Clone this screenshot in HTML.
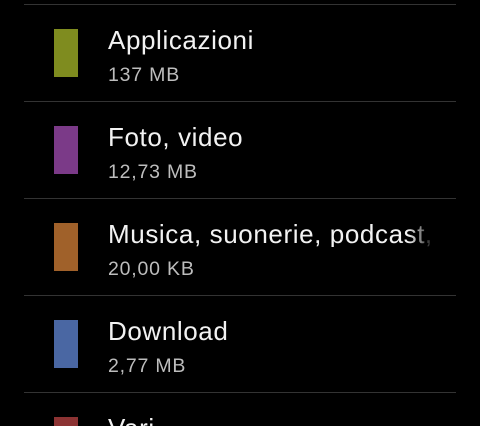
<!DOCTYPE html>
<html><head><style>
html,body{margin:0;padding:0;background:#000;width:480px;height:426px;overflow:hidden;font-family:"Liberation Sans",Roboto,sans-serif;position:relative}
.l{position:absolute;left:24px;width:432px;height:1px;background:#333}
.s{position:absolute;left:54px;width:24px;height:48px}
.t{position:absolute;left:108px;font-size:26px;letter-spacing:0.6px;color:#f2f2f2;line-height:26px;white-space:nowrap}
.u{position:absolute;left:108px;font-size:19.5px;letter-spacing:0.8px;color:#bdbdbd;line-height:20px;white-space:nowrap}
</style></head><body>
<div class="l" style="top:4px"></div>
<div class="s" style="top:29px;background:#7f8c1f"></div>
<div class="t" style="top:27px">Applicazioni</div>
<div class="u" style="top:65px">137 MB</div>
<div class="l" style="top:101px"></div>
<div class="s" style="top:126px;background:#7b3a88"></div>
<div class="t" style="top:124px">Foto, video</div>
<div class="u" style="top:162px">12,73 MB</div>
<div class="l" style="top:198px"></div>
<div class="s" style="top:223px;background:#a0612a"></div>
<div class="t" style="top:221px;width:326px;overflow:hidden;-webkit-mask-image:linear-gradient(to right,#000 300px,rgba(0,0,0,0.35) 318px,transparent 326px)">Musica, suonerie, podcast, altro</div>
<div class="u" style="top:259px">20,00 KB</div>
<div class="l" style="top:295px"></div>
<div class="s" style="top:320px;background:#4a67a3"></div>
<div class="t" style="top:318px">Download</div>
<div class="u" style="top:356px">2,77 MB</div>
<div class="l" style="top:392px"></div>
<div class="s" style="top:417px;height:9px;background:#8c3333"></div>
<div class="t" style="top:415px;height:11px;overflow:hidden">Vari</div>
</body></html>
